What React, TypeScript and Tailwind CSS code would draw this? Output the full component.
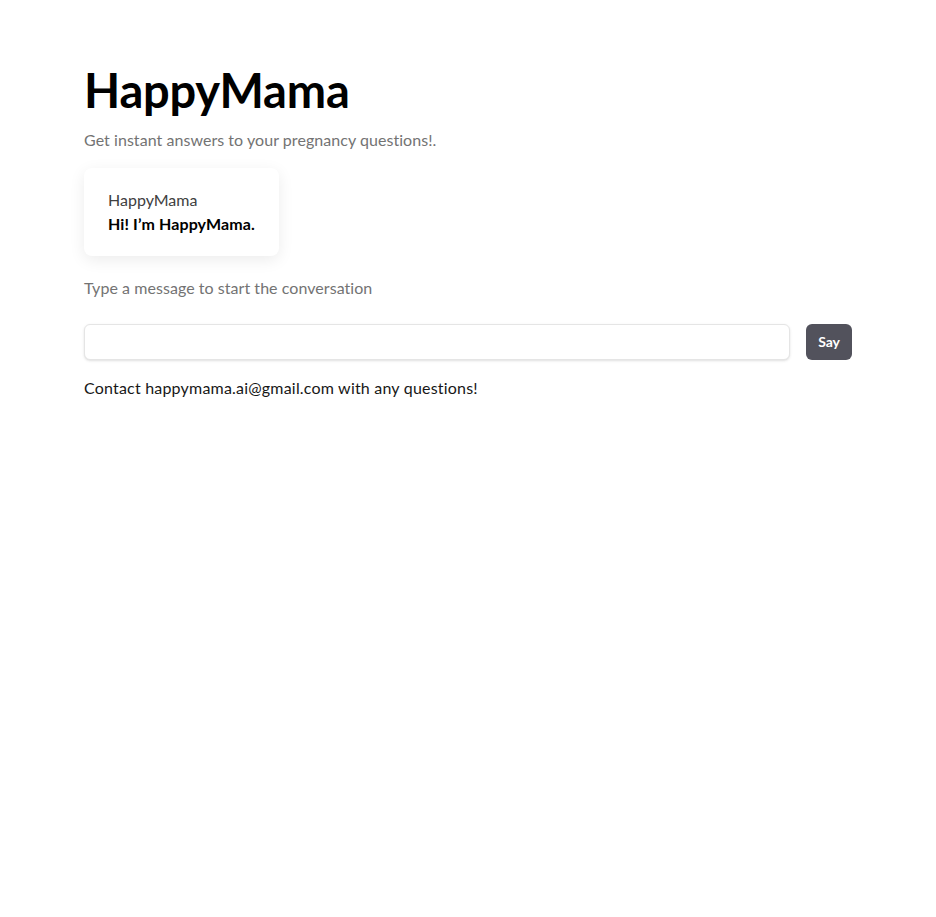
export default function App() {
  return (
    <div className="min-h-screen bg-white text-black" style={{ fontFamily: "Lato, sans-serif" }}>
      <main className="mx-auto max-w-3xl pt-[62px]">
        <h1 className="text-[47px] font-bold leading-[56px] tracking-[-0.2px]">HappyMama</h1>
        <p className="mt-[10px] text-base leading-6 tracking-[0.05px] text-neutral-500">
          Get instant answers to your pregnancy questions!.
        </p>

        <div className="mt-4 flex flex-col gap-5">
          <div className="w-fit rounded-lg bg-white px-6 py-5 shadow-[0_4px_16px_rgba(0,0,0,0.08)]">
            <p className="text-base leading-6 text-neutral-700">HappyMama</p>
            <p className="text-base font-bold leading-6 tracking-[0.1px]">Hi! I’m HappyMama.</p>
          </div>
          <p className="text-base leading-6 tracking-[0.05px] text-neutral-500">Type a message to start the conversation</p>
        </div>

        <form className="mt-6 flex items-center gap-4" onSubmit={(e) => e.preventDefault()}>
          <input
            type="text"
            className="h-9 flex-1 rounded-md border border-neutral-200 bg-white px-3 shadow-sm outline-none"
          />
          <button type="submit" className="h-9 rounded-md bg-zinc-600 px-3 text-sm font-bold text-white">
            Say
          </button>
        </form>

        <p className="mt-4 text-base leading-6 tracking-[0.2px] text-neutral-900">
          Contact happymama.ai@gmail.com with any questions!
        </p>
      </main>
    </div>
  );
}
